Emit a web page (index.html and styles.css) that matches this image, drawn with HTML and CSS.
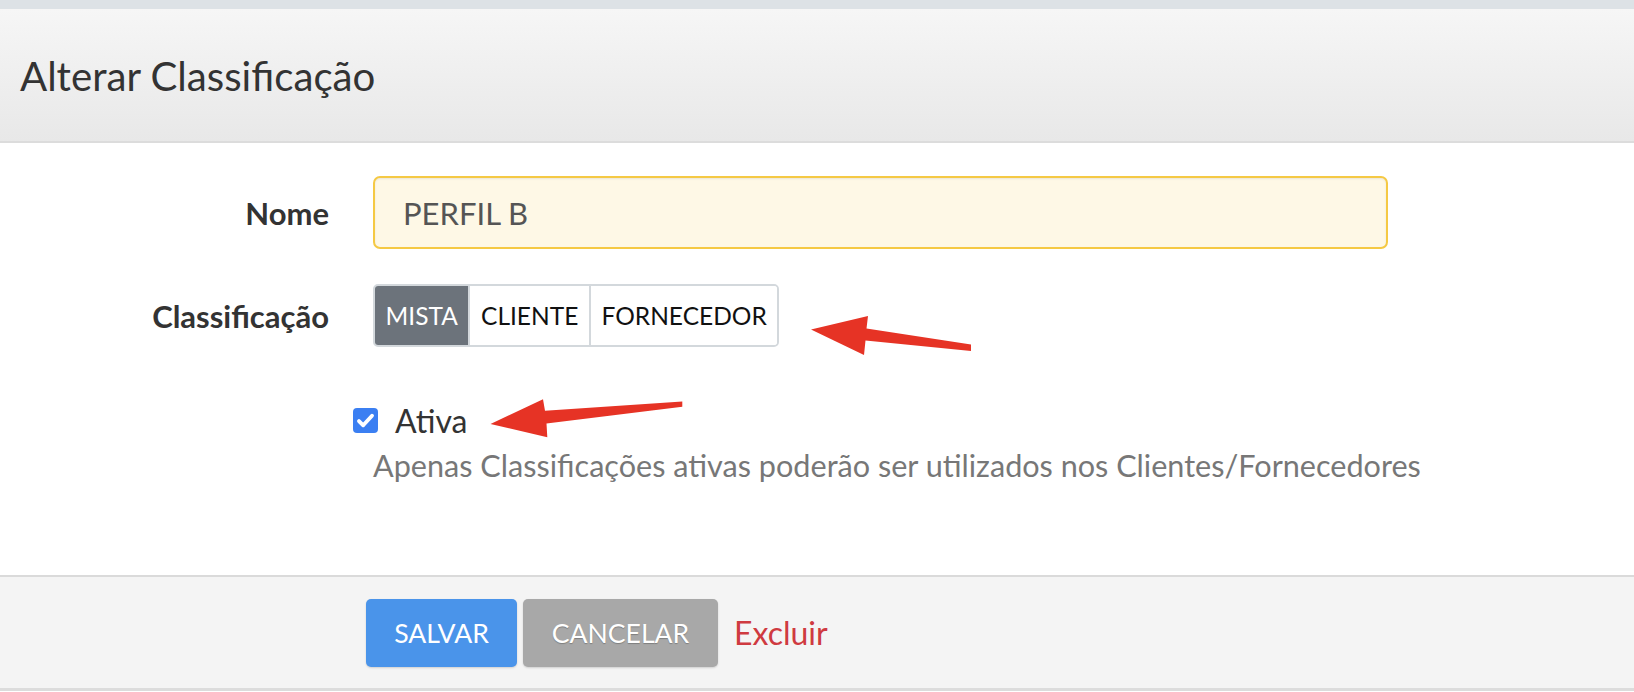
FILE: index.html
```html
<!DOCTYPE html>
<html lang="pt-BR">
<head>
<meta charset="utf-8">
<title>Alterar Classificação</title>
<link rel="stylesheet" href="styles.css">
</head>
<body>
<div class="page">
  <div class="topbar"></div>
  <div class="header">
    <h1 class="title">Alterar Classificação</h1>
  </div>
  <div class="form">
    <div class="row">
      <label class="label">Nome</label>
      <div class="control">
        <div class="input">PERFIL B</div>
      </div>
    </div>
    <div class="row row-class">
      <label class="label">Classificação</label>
      <div class="control">
        <div class="toggle">
          <span class="seg active">MISTA</span>
          <span class="seg">CLIENTE</span>
          <span class="seg">FORNECEDOR</span>
        </div>
      </div>
    </div>
    <div class="row row-check">
      <div class="label"></div>
      <div class="control">
        <div class="check-line">
          <span class="checkbox">
            <svg viewBox="0 0 24 24" width="23" height="23"><path d="M5.2 12.6l4.4 4.4L18.8 7" fill="none" stroke="#fff" stroke-width="4" stroke-linecap="round" stroke-linejoin="round"/></svg>
          </span>
          <span class="check-text">Ativa</span>
        </div>
        <p class="help">Apenas Classificações ativas poderão ser utilizados nos Clientes/Fornecedores</p>
      </div>
    </div>
  </div>
  <div class="footer">
    <div class="actions">
      <button class="btn btn-primary">SALVAR</button>
      <button class="btn btn-secondary">CANCELAR</button>
      <a class="link-danger">Excluir</a>
    </div>
  </div>
  <svg class="arrows" width="1634" height="692" viewBox="0 0 1634 692">
    <polygon fill="#e63325" points="811,329.5 868,316 866.5,328.5 971,344.5 971,351 865.5,340.5 864,355"/>
    <polygon fill="#e63325" points="490.5,424 543,399.3 545,410.7 682.3,401.5 682.3,406.8 546.5,423.5 547.3,437.3"/>
  </svg>
</div>
</body>
</html>
```

FILE: styles.css
```css
* { box-sizing: border-box; }
html, body { margin: 0; padding: 0; background: #fff; }
body { font-family: Lato, "Open Sans", "Liberation Sans", sans-serif; color: #333; }
.page { position: relative; width: 1634px; height: 692px; overflow: hidden; }
.topbar { height: 9px; background: #dde2e6; }
.header {
  height: 134px;
  background: linear-gradient(#f6f6f6, #e8e8e8);
  border-bottom: 2px solid #dcdcdc;
  display: flex;
  align-items: center;
  padding-left: 20px;
}
.title { margin: 0; font-size: 40.2px; font-weight: 400; color: #333; }
.form { height: 432px; padding-top: 33px; }
.row { display: flex; align-items: center; }
.label { width: 329px; text-align: right; font-weight: 700; font-size: 31px; color: #333; flex: none; }
.control { margin-left: 44px; }
.input {
  width: 1015px; height: 73px;
  border: 2px solid #f5c944;
  border-radius: 7px;
  background: #fef8e6;
  box-shadow: inset 0 1px 2px rgba(0,0,0,0.08);
  font-size: 31px; color: #555;
  padding-left: 28px;
  display: flex; align-items: center;
}
.row-class { margin-top: 35px; }
.toggle {
  display: inline-flex;
  border: 2px solid #d3d8dc;
  border-radius: 5px;
  height: 63px;
  overflow: hidden;
}
.seg {
  display: flex; align-items: center;
  padding: 0 10.6px;
  font-size: 24.5px; color: #111;
  background: #fff;
  border-left: 2px solid #d3d8dc;
}
.seg:first-child { border-left: none; }
.seg.active { background: #6c737b; color: #fff; }
.row-check { margin-top: 59px; align-items: flex-start; }
.check-line { display: flex; align-items: center; margin-left: -20px; height: 28px; }
.checkbox {
  width: 25px; height: 25px; border-radius: 4px;
  background: #3b7ff2;
  display: flex; align-items: center; justify-content: center;
}
.check-text { font-size: 32px; margin-left: 17px; color: #333; }
.help { margin: 13px 0 0; font-size: 30.6px; color: #777; }
.footer {
  height: 116px;
  background: #f4f4f4;
  border-top: 2px solid #dadada;
  border-bottom: 3px solid #dcdcdc;
  padding-left: 366px;
  display: flex; align-items: center;
}
.actions { display: flex; align-items: center; }
.btn {
  height: 68px; border: none; border-radius: 5px;
  font-family: Lato, "Liberation Sans", sans-serif;
  font-size: 26.6px; color: #fff; padding: 0;
  box-shadow: 0 1px 2px rgba(0,0,0,0.15);
}
.btn-primary { width: 151px; background: #4a94ea; }
.btn-secondary { width: 195px; margin-left: 6px; background: #a8a8a8; text-shadow: 0 1px 1px rgba(0,0,0,0.25); }
.link-danger { margin-left: 16px; font-size: 32px; color: #cf3a40; }
.arrows { position: absolute; left: 0; top: 0; pointer-events: none; }
```
